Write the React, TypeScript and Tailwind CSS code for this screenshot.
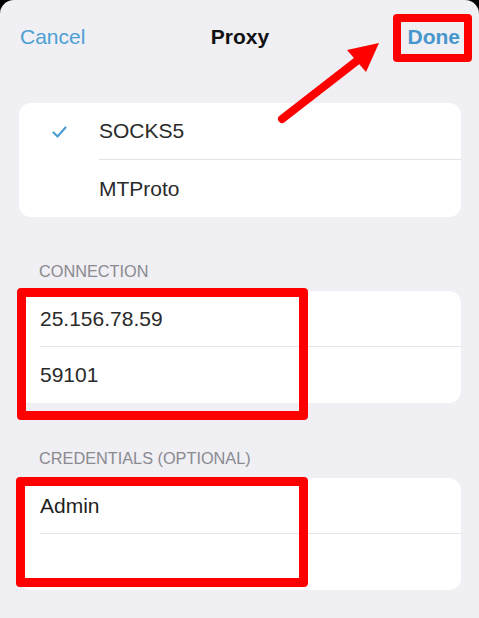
export default function App() {
  return (
    <div
      className="relative h-[618px] w-full overflow-hidden bg-black"
      style={{ fontFamily: '"Liberation Sans", Arial, sans-serif' }}
    >
      <div className="h-full rounded-t-[14px] bg-[#efeff4]">
        {/* Header */}
        <div className="grid h-[74px] grid-cols-[1fr_auto_1fr] items-center pl-[20px] pr-[19px] text-[21px]">
          <span className="text-[#4d9fd3]">Cancel</span>
          <span className="font-bold text-[#111]">Proxy</span>
          <span className="justify-self-end font-semibold text-[#4797cc]">Done</span>
        </div>

        {/* Proxy type */}
        <div className="ml-[19px] mr-[18px] mt-[29px] overflow-hidden rounded-[12px] bg-white text-[21px] text-[#2a2a2a]">
          <div className="flex h-[57px] items-center">
            <div className="w-[80px] pl-[33px]">
              <svg width="15" height="12" viewBox="0 0 15 12" fill="none">
                <path d="M1.5 6.5 L5.5 10.5 L13.5 1.5" stroke="#4d9fd3" strokeWidth="2.2" strokeLinecap="round" strokeLinejoin="round" />
              </svg>
            </div>
            <div className="flex h-full flex-1 items-center border-b border-[#e3e3e7]">SOCKS5</div>
          </div>
          <div className="flex h-[57px] items-center pl-[80px]">MTProto</div>
        </div>

        {/* Connection */}
        <div className="mb-[10px] ml-[39px] mt-[45px] h-[19px] text-[16.3px] leading-[19px] text-[#8a8a8f]">CONNECTION</div>
        <div className="ml-[19px] mr-[18px] overflow-hidden rounded-[12px] bg-white text-[21px] text-[#2a2a2a]">
          <div className="h-[56px] pl-[21px]">
            <div className="flex h-full items-center border-b border-[#e3e3e7]">25.156.78.59</div>
          </div>
          <div className="flex h-[56px] items-center pl-[21px]">59101</div>
        </div>

        {/* Credentials */}
        <div className="mb-[10px] ml-[39px] mt-[46px] h-[19px] text-[16.3px] leading-[19px] text-[#8a8a8f]">CREDENTIALS (OPTIONAL)</div>
        <div className="ml-[19px] mr-[18px] overflow-hidden rounded-[12px] bg-white text-[21px] text-[#1f1f1f]">
          <div className="h-[56px] pl-[21px]">
            <div className="flex h-full items-center border-b border-[#e3e3e7]">Admin</div>
          </div>
          <div className="h-[56px]" />
        </div>
      </div>

      {/* Annotations */}
      <div className="pointer-events-none absolute left-[393px] top-[14px] h-[48px] w-[79px] rounded-[4px] border-[8px] border-[#ff0000]" />
      <div className="pointer-events-none absolute left-[17px] top-[288px] h-[132px] w-[291px] rounded-[4px] border-[9px] border-[#ff0000]" />
      <div className="pointer-events-none absolute left-[16px] top-[477px] h-[110px] w-[292px] rounded-[4px] border-[9px] border-[#ff0000]" />
      <svg className="pointer-events-none absolute left-0 top-0" width="479" height="618" viewBox="0 0 479 618">
        <line x1="282" y1="119" x2="358" y2="60" stroke="#ff0000" strokeWidth="8" strokeLinecap="round" />
        <polygon points="347,50 379,43 366,72" fill="#ff0000" />
      </svg>
    </div>
  )
}
